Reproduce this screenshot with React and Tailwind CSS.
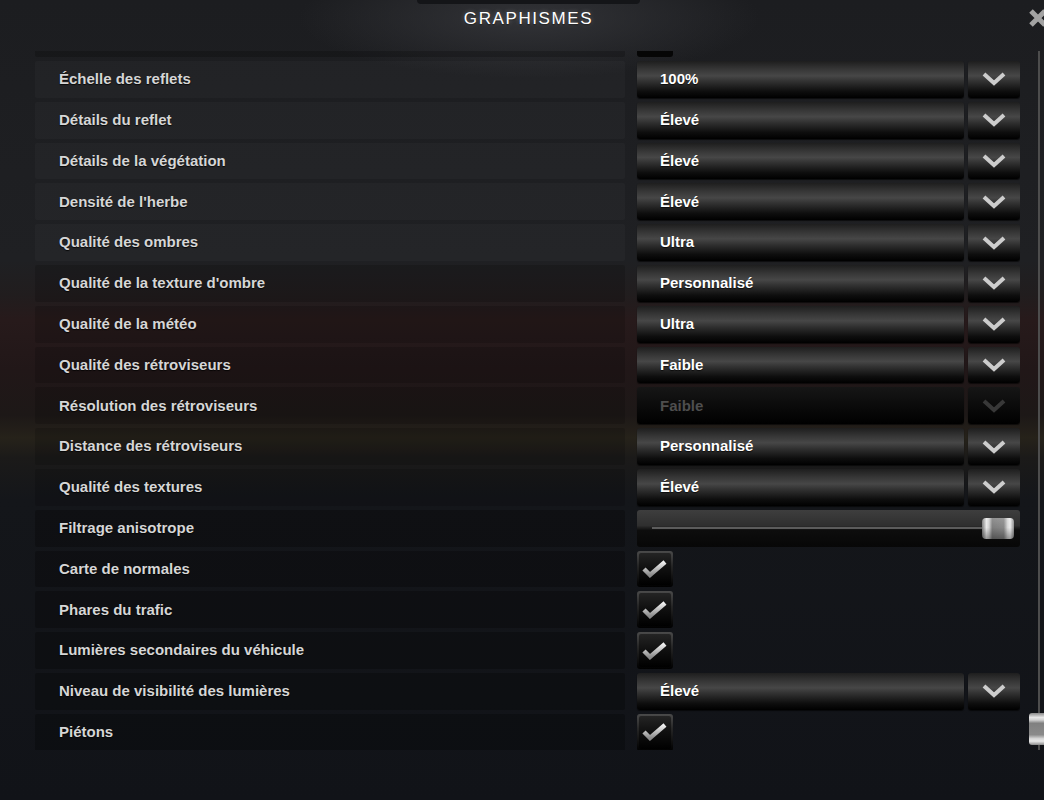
import React from 'react';

const ROWS = [
  { label: 'Échelle des reflets', type: 'select', value: '100%' },
  { label: 'Détails du reflet', type: 'select', value: 'Élevé' },
  { label: 'Détails de la végétation', type: 'select', value: 'Élevé' },
  { label: "Densité de l'herbe", type: 'select', value: 'Élevé' },
  { label: 'Qualité des ombres', type: 'select', value: 'Ultra' },
  { label: "Qualité de la texture d'ombre", type: 'select', value: 'Personnalisé' },
  { label: 'Qualité de la météo', type: 'select', value: 'Ultra' },
  { label: 'Qualité des rétroviseurs', type: 'select', value: 'Faible' },
  { label: 'Résolution des rétroviseurs', type: 'select', value: 'Faible', disabled: true },
  { label: 'Distance des rétroviseurs', type: 'select', value: 'Personnalisé' },
  { label: 'Qualité des textures', type: 'select', value: 'Élevé' },
  { label: 'Filtrage anisotrope', type: 'slider' },
  { label: 'Carte de normales', type: 'check' },
  { label: 'Phares du trafic', type: 'check' },
  { label: 'Lumières secondaires du véhicule', type: 'check' },
  { label: 'Niveau de visibilité des lumières', type: 'select', value: 'Élevé' },
  { label: 'Piétons', type: 'check' },
];

// fond des libellés : plus clair en haut, plus sombre en bas
const rowBg = (i) => {
  if (i < 5) return 'bg-white/[0.025]';
  if (i < 11) return 'bg-black/15';
  return 'bg-black/25';
};

const GLOSS =
  'bg-[linear-gradient(to_bottom,#1e1e1e_0%,#363636_22%,#474747_40%,#303030_56%,#0e0e0e_82%,#000_100%)]';

function Chevron({ color = '#cfcfcf' }) {
  return (
    <svg width="24" height="14" viewBox="0 0 24 14">
      <polyline points="2,2 12,11 22,2" fill="none" stroke={color} strokeWidth="4" />
    </svg>
  );
}

function Select({ value, disabled }) {
  const box = disabled
    ? 'bg-[linear-gradient(to_bottom,#161616_0%,#0c0c0c_45%,#000_100%)]'
    : GLOSS;
  return (
    <div className="flex h-full gap-[4px]">
      <div
        className={`w-[327px] h-full rounded-[3px] flex items-center pl-[23px] text-[15px] font-bold shadow-[0_1px_1px_rgba(0,0,0,0.6)] ${box} ${
          disabled ? 'text-[#4e4e4e]' : 'text-white [text-shadow:0_1px_1px_rgba(0,0,0,0.7)]'
        }`}
      >
        {value}
      </div>
      <div
        className={`w-[52px] h-full rounded-[3px] flex items-center justify-center shadow-[0_1px_1px_rgba(0,0,0,0.6)] ${box}`}
      >
        <Chevron color={disabled ? '#383838' : '#cdcdcd'} />
      </div>
    </div>
  );
}

function Check() {
  return (
    <div className="w-[36px] h-full rounded-[3px] p-[2px] bg-[linear-gradient(to_bottom,#4a4a4a_0%,#262626_40%,#000_100%)]">
      <div className="w-full h-full rounded-[2px] flex items-center justify-center bg-[linear-gradient(to_bottom,#242424_0%,#111_45%,#000_100%)]">
        <svg width="28" height="22" viewBox="0 0 28 22">
          <defs>
            <linearGradient id="ck" x1="0" y1="0" x2="0" y2="1">
              <stop offset="0" stopColor="#f2f2f2" />
              <stop offset="1" stopColor="#8a8a8a" />
            </linearGradient>
          </defs>
          <polyline points="3,11 9,17 24,4" fill="none" stroke="url(#ck)" strokeWidth="4.5" />
        </svg>
      </div>
    </div>
  );
}

function Slider() {
  return (
    <div className="w-[383px] h-full rounded-[3px] flex items-center pl-[15px] pr-[6px] bg-[linear-gradient(to_bottom,#3e3e3e_0%,#2f2f2f_42%,#0d0d0d_55%,#070707_100%)]">
      <div className="flex-1 h-[2px] bg-[#5c5c5c] mr-[-3px]" />
      <div className="w-[32px] h-[21px] rounded-[4px] bg-[linear-gradient(to_bottom,rgba(255,255,255,0.15),transparent_45%,rgba(0,0,0,0.35)),linear-gradient(to_right,#7a7a7a_0%,#e9e9e9_14%,#d0d0d0_22%,#7e7e7e_32%,#888_68%,#d8d8d8_80%,#ececec_88%,#8a8a8a_100%)]" />
    </div>
  );
}

export default function App() {
  return (
    <div className="relative w-[1044px] h-[800px] overflow-hidden font-['Liberation_Sans',Arial,sans-serif] bg-[radial-gradient(ellipse_230px_60px_at_529px_18px,#323337,transparent),linear-gradient(to_bottom,#1c1d20_0px,#1f2023_260px,#211d1e_295px,#271a1b_320px,#211718_370px,#1d1817_415px,#26221a_438px,#1b1a19_458px,#14161a_500px,#111318_800px)]">
      {/* En-tête */}
      <header className="relative h-[51px]">
        <div className="ml-[417px] w-[223px] flex flex-col items-center">
          <div className="w-full h-[4px] rounded-b-[4px] bg-[#141518]" />
          <h1 className="mt-[5px] text-[17px] leading-[20px] tracking-[1.6px] text-white [text-shadow:0_0_4px_rgba(255,255,255,0.35),0_1px_2px_rgba(0,0,0,0.9)]">
            GRAPHISMES
          </h1>
        </div>
        <button className="absolute left-[1028px] top-[8px]">
          <svg width="20" height="20" viewBox="0 0 20 20">
            <path d="M3 3 L17 17 M17 3 L3 17" stroke="#a3a3a3" strokeWidth="5" />
          </svg>
        </button>
      </header>

      {/* Liste des options */}
      <div className="flex h-[699px]">
        <div className="ml-[35px] w-[985px] overflow-hidden">
          <div className="mt-[-30.8px] flex flex-col gap-[4px]">
            <div className="flex h-[36.8px] gap-[12px]">
              <div className="w-[590px] h-full rounded-[2px] bg-black/20" />
              <div className="w-[36px] h-full rounded-[3px] bg-[#060606]" />
            </div>
            {ROWS.map((row, i) => (
              <div key={row.label} className="flex h-[36.8px] gap-[12px]">
                <div
                  className={`w-[590px] h-full rounded-[2px] flex items-center pl-[24px] text-[15px] font-bold text-[#d6d6d6] [text-shadow:0_1px_1px_rgba(0,0,0,0.8)] ${rowBg(i)}`}
                >
                  {row.label}
                </div>
                <div className="h-full">
                  {row.type === 'select' && <Select value={row.value} disabled={row.disabled} />}
                  {row.type === 'check' && <Check />}
                  {row.type === 'slider' && <Slider />}
                </div>
              </div>
            ))}
          </div>
        </div>

        {/* Barre de défilement */}
        <div className="relative ml-[18px] w-[2px] h-[699px] bg-[#4d4d4d]">
          <div className="absolute left-[-9px] top-[662px] w-[18px] h-[32px] rounded-[3px] bg-[linear-gradient(to_bottom,#8a8a8a_0%,#e6e6e6_14%,#cfcfcf_22%,#808080_32%,#8a8a8a_68%,#d6d6d6_80%,#e8e8e8_88%,#8a8a8a_100%)]" />
        </div>
      </div>
    </div>
  );
}
